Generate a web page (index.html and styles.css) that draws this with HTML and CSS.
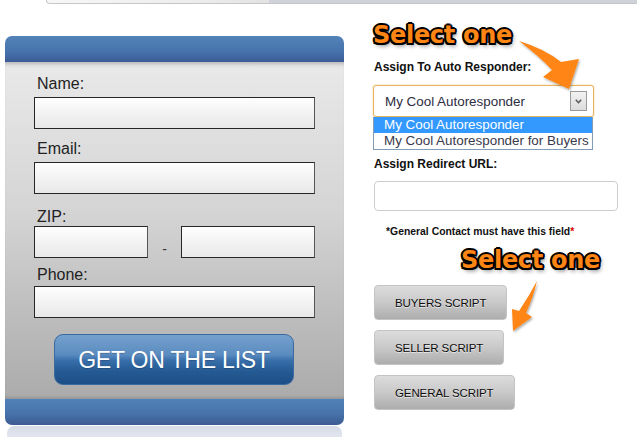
FILE: index.html
```html
<!DOCTYPE html>
<html lang="en">
<head>
<meta charset="utf-8">
<title>Signup form</title>
<link rel="stylesheet" href="styles.css">
</head>
<body>
<div class="topbar"><div class="topbar-tab"></div></div>
<div class="layout">
  <div class="signup">
    <div class="signup-head"></div>
    <form class="signup-body">
      <label class="lbl lbl-name">Name:</label>
      <input class="field" type="text">
      <label class="lbl lbl-email">Email:</label>
      <input class="field" type="text">
      <label class="lbl lbl-zip">ZIP:</label>
      <div class="zip-row">
        <input class="field field-zip1" type="text">
        <span class="zip-dash">-</span>
        <input class="field field-zip2" type="text">
      </div>
      <label class="lbl lbl-phone">Phone:</label>
      <input class="field" type="text">
      <button class="cta" type="button">GET ON THE LIST</button>
    </form>
    <div class="signup-foot"></div>
    <div class="signup-reflect"></div>
  </div>

  <div class="settings">
    <div class="set-label">Assign To Auto Responder:</div>
    <div class="select">
      <span class="select-text">My Cool Autoresponder</span>
      <span class="select-btn">
        <svg width="7" height="5" viewBox="0 0 7 5"><path d="M0.8 0.8 L3.5 3.8 L6.2 0.8" fill="none" stroke="#555" stroke-width="1.4"/></svg>
      </span>
    </div>
    <ul class="options">
      <li class="opt opt-active">My Cool Autoresponder</li>
      <li class="opt">My Cool Autoresponder for Buyers</li>
    </ul>
    <div class="set-label set-label-url">Assign Redirect URL:</div>
    <input class="url" type="text">
    <p class="note">*General Contact must have this field<span class="req">*</span></p>
    <div class="scripts">
      <button class="script-btn" type="button">BUYERS SCRIPT</button>
      <button class="script-btn" type="button">SELLER SCRIPT</button>
      <button class="script-btn" type="button">GENERAL SCRIPT</button>
    </div>
  </div>
</div>

<div class="callout callout-top">Select one</div>
<div class="callout callout-bottom">Select one</div>
<svg class="arrows" width="637" height="437" viewBox="0 0 637 437">
  <defs>
    <filter id="sh" x="-20%" y="-20%" width="140%" height="140%">
      <feDropShadow dx="1" dy="1.5" stdDeviation="1" flood-color="#000" flood-opacity="0.35"/>
    </filter>
  </defs>
  <path filter="url(#sh)" fill="#ff8514" d="M519 41 Q545 49 561 62 L579 59 L569 89 L543 77 L552 70 Q539 56 519 41 Z"/>
  <path filter="url(#sh)" fill="#ff8514" d="M537 281 Q533 298 526 313 L532 317 L513 331 L512 309 L519 311 Q529 296 537 281 Z"/>
</svg>
</body>
</html>
```

FILE: styles.css
```css
* { box-sizing: border-box; }
html, body { margin: 0; padding: 0; }
body {
  position: relative;
  width: 637px;
  height: 437px;
  overflow: hidden;
  background: #fff;
  font-family: "Liberation Sans", Arial, sans-serif;
  color: #222;
}

.topbar {
  height: 4px;
  margin-left: 46px;
  display: flex;
  border-bottom: 1px solid #c4c6c9;
  border-left: 1px solid #c4c6c9;
  border-bottom-left-radius: 4px;
  background: #cfd2d6;
}
.topbar-tab {
  width: 222px;
  background: linear-gradient(to right, #f7f7f7, #ececec 70%, #e2e2e2);
  border-bottom-left-radius: 4px;
}

.layout {
  display: flex;
  align-items: flex-start;
  padding-top: 32px;
}

/* ---------- left signup panel ---------- */
.signup {
  margin-left: 5px;
  width: 339px;
}
.signup-head {
  height: 26px;
  border-radius: 7px 7px 0 0;
  background: linear-gradient(#5283b9, #4673ab 60%, #3b5b96);
}
.signup-body {
  display: flex;
  flex-direction: column;
  align-items: flex-start;
  margin: 0;
  height: 337px;
  padding: 14px 0 0 29px;
  background: linear-gradient(#e9e9e9, #d4d4d4 45%, #bdbdbd 75%, #ababab);
  box-shadow: inset 0 5px 4px -3px rgba(0,0,0,0.22), inset 0 -4px 3px -2px rgba(0,0,0,0.12);
}
.signup-foot {
  height: 26px;
  border-radius: 0 0 7px 7px;
  background: linear-gradient(#5282b7, #4773ab 55%, #3c5a93);
}
.signup-reflect {
  height: 14px;
  margin: 1px 2px 0;
  border-radius: 7px 7px 0 0;
  background: linear-gradient(#d5dbe7, #e6e9f0);
}

.lbl {
  display: block;
  font-size: 16px;
  line-height: 16px;
  padding-left: 3px;
  color: #222;
}
.lbl-name { margin-bottom: 5px; }
.lbl-email { margin-top: 12px; margin-bottom: 5px; }
.lbl-zip { margin-top: 15px; margin-bottom: 1px; }
.lbl-phone { margin-top: 9px; margin-bottom: 3px; }

.field {
  display: block;
  width: 281px;
  height: 32px;
  margin: 0;
  padding: 0 6px;
  border: 1px solid #262626;
  border-right-color: #555;
  border-radius: 0;
  background: linear-gradient(#fefefe, #f3f3f3 50%, #e8e8e8);
  font: 14px "Liberation Sans", Arial, sans-serif;
}
.zip-row {
  display: flex;
  align-items: center;
  width: 281px;
}
.field-zip1 { width: 114px; }
.field-zip2 { width: 134px; margin-left: auto; }
.zip-dash {
  flex: 1;
  text-align: center;
  font-size: 14px;
  padding-top: 14px;
  color: #333;
}

.cta {
  margin: 16px 0 0 20px;
  width: 240px;
  height: 51px;
  border: 1px solid #3b6aa0;
  border-radius: 9px;
  background: linear-gradient(#74a0cd, #5b8cc0 40%, #386ea9 52%, #245a93 75%, #1d4e86);
  color: #fff;
  font: 23px "Liberation Sans", Arial, sans-serif;
  letter-spacing: -0.2px;
  padding: 2px 0 0;
  text-shadow: 0 1px 1px rgba(0,0,0,0.2);
}

/* ---------- right settings column ---------- */
.settings {
  margin-left: 29px;
  padding-top: 24px;
  width: 250px;
}
.set-label {
  font-weight: bold;
  font-size: 12px;
  line-height: 14px;
  color: #111;
  padding-left: 1px;
}
.select {
  display: flex;
  align-items: center;
  margin-top: 11px;
  width: 221px;
  height: 32px;
  padding: 0 6px 0 11px;
  border: 1px solid #e7b35e;
  border-radius: 3px;
  box-shadow: 0 0 2px rgba(240, 170, 70, 0.6);
  background: #fff;
}
.select-text {
  flex: 1;
  font-size: 13.4px;
  color: #2d2d3f;
}
.select-btn {
  display: flex;
  align-items: center;
  justify-content: center;
  width: 17px;
  height: 20px;
  border: 1px solid #9a9a9a;
  background: linear-gradient(#f2f2f2, #dcdcdc);
}
.options {
  list-style: none;
  margin: 0;
  padding: 0;
  width: 220px;
  border: 1px solid #7f9db9;
  border-top: none;
  background: #fff;
}
.opt {
  height: 16px;
  line-height: 16px;
  padding-left: 10px;
  font-size: 13.4px;
  color: #3a3a4a;
  white-space: nowrap;
}
.opt-active {
  background: #3399ff;
  color: #fff;
}
.set-label-url { margin-top: 7px; }
.url {
  display: block;
  margin: 10px 0 0 1px;
  width: 244px;
  height: 30px;
  border: 1px solid #cccccc;
  border-radius: 4px;
  background: #fff;
}
.note {
  margin: 15px 0 0 13px;
  font-weight: bold;
  font-size: 10.4px;
  line-height: 12px;
  color: #111;
}
.req { color: #d00; }

.scripts {
  display: flex;
  flex-direction: column;
  align-items: flex-start;
  gap: 10px;
  margin-top: 47px;
  padding-left: 1px;
}
.script-btn {
  height: 35px;
  padding: 0 20px;
  border: 1px solid #c4c4c4;
  border-radius: 4px;
  background: linear-gradient(#dcdcdc, #c9c9c9 50%, #adadad);
  font: 11.5px "Liberation Sans", Arial, sans-serif;
  letter-spacing: -0.1px;
  color: #0d0d0d;
  text-shadow: 0 1px 0 rgba(255,255,255,0.6);
}

/* ---------- annotations ---------- */
.callout {
  position: absolute;
  font-family: "DejaVu Sans", sans-serif;
  font-weight: bold;
  font-size: 24px;
  line-height: 24px;
  letter-spacing: -0.3px;
  color: #ff8514;
  text-shadow:
    2px 0 0 #000, -2px 0 0 #000, 0 2px 0 #000, 0 -2px 0 #000,
    1.5px 1.5px 0 #000, -1.5px -1.5px 0 #000, 1.5px -1.5px 0 #000, -1.5px 1.5px 0 #000,
    2px 3px 4px rgba(0,0,0,0.5);
}
.callout-top { left: 373px; top: 23px; }
.callout-bottom { left: 461px; top: 248px; }
.arrows {
  position: absolute;
  left: 0;
  top: 0;
  pointer-events: none;
}
```
